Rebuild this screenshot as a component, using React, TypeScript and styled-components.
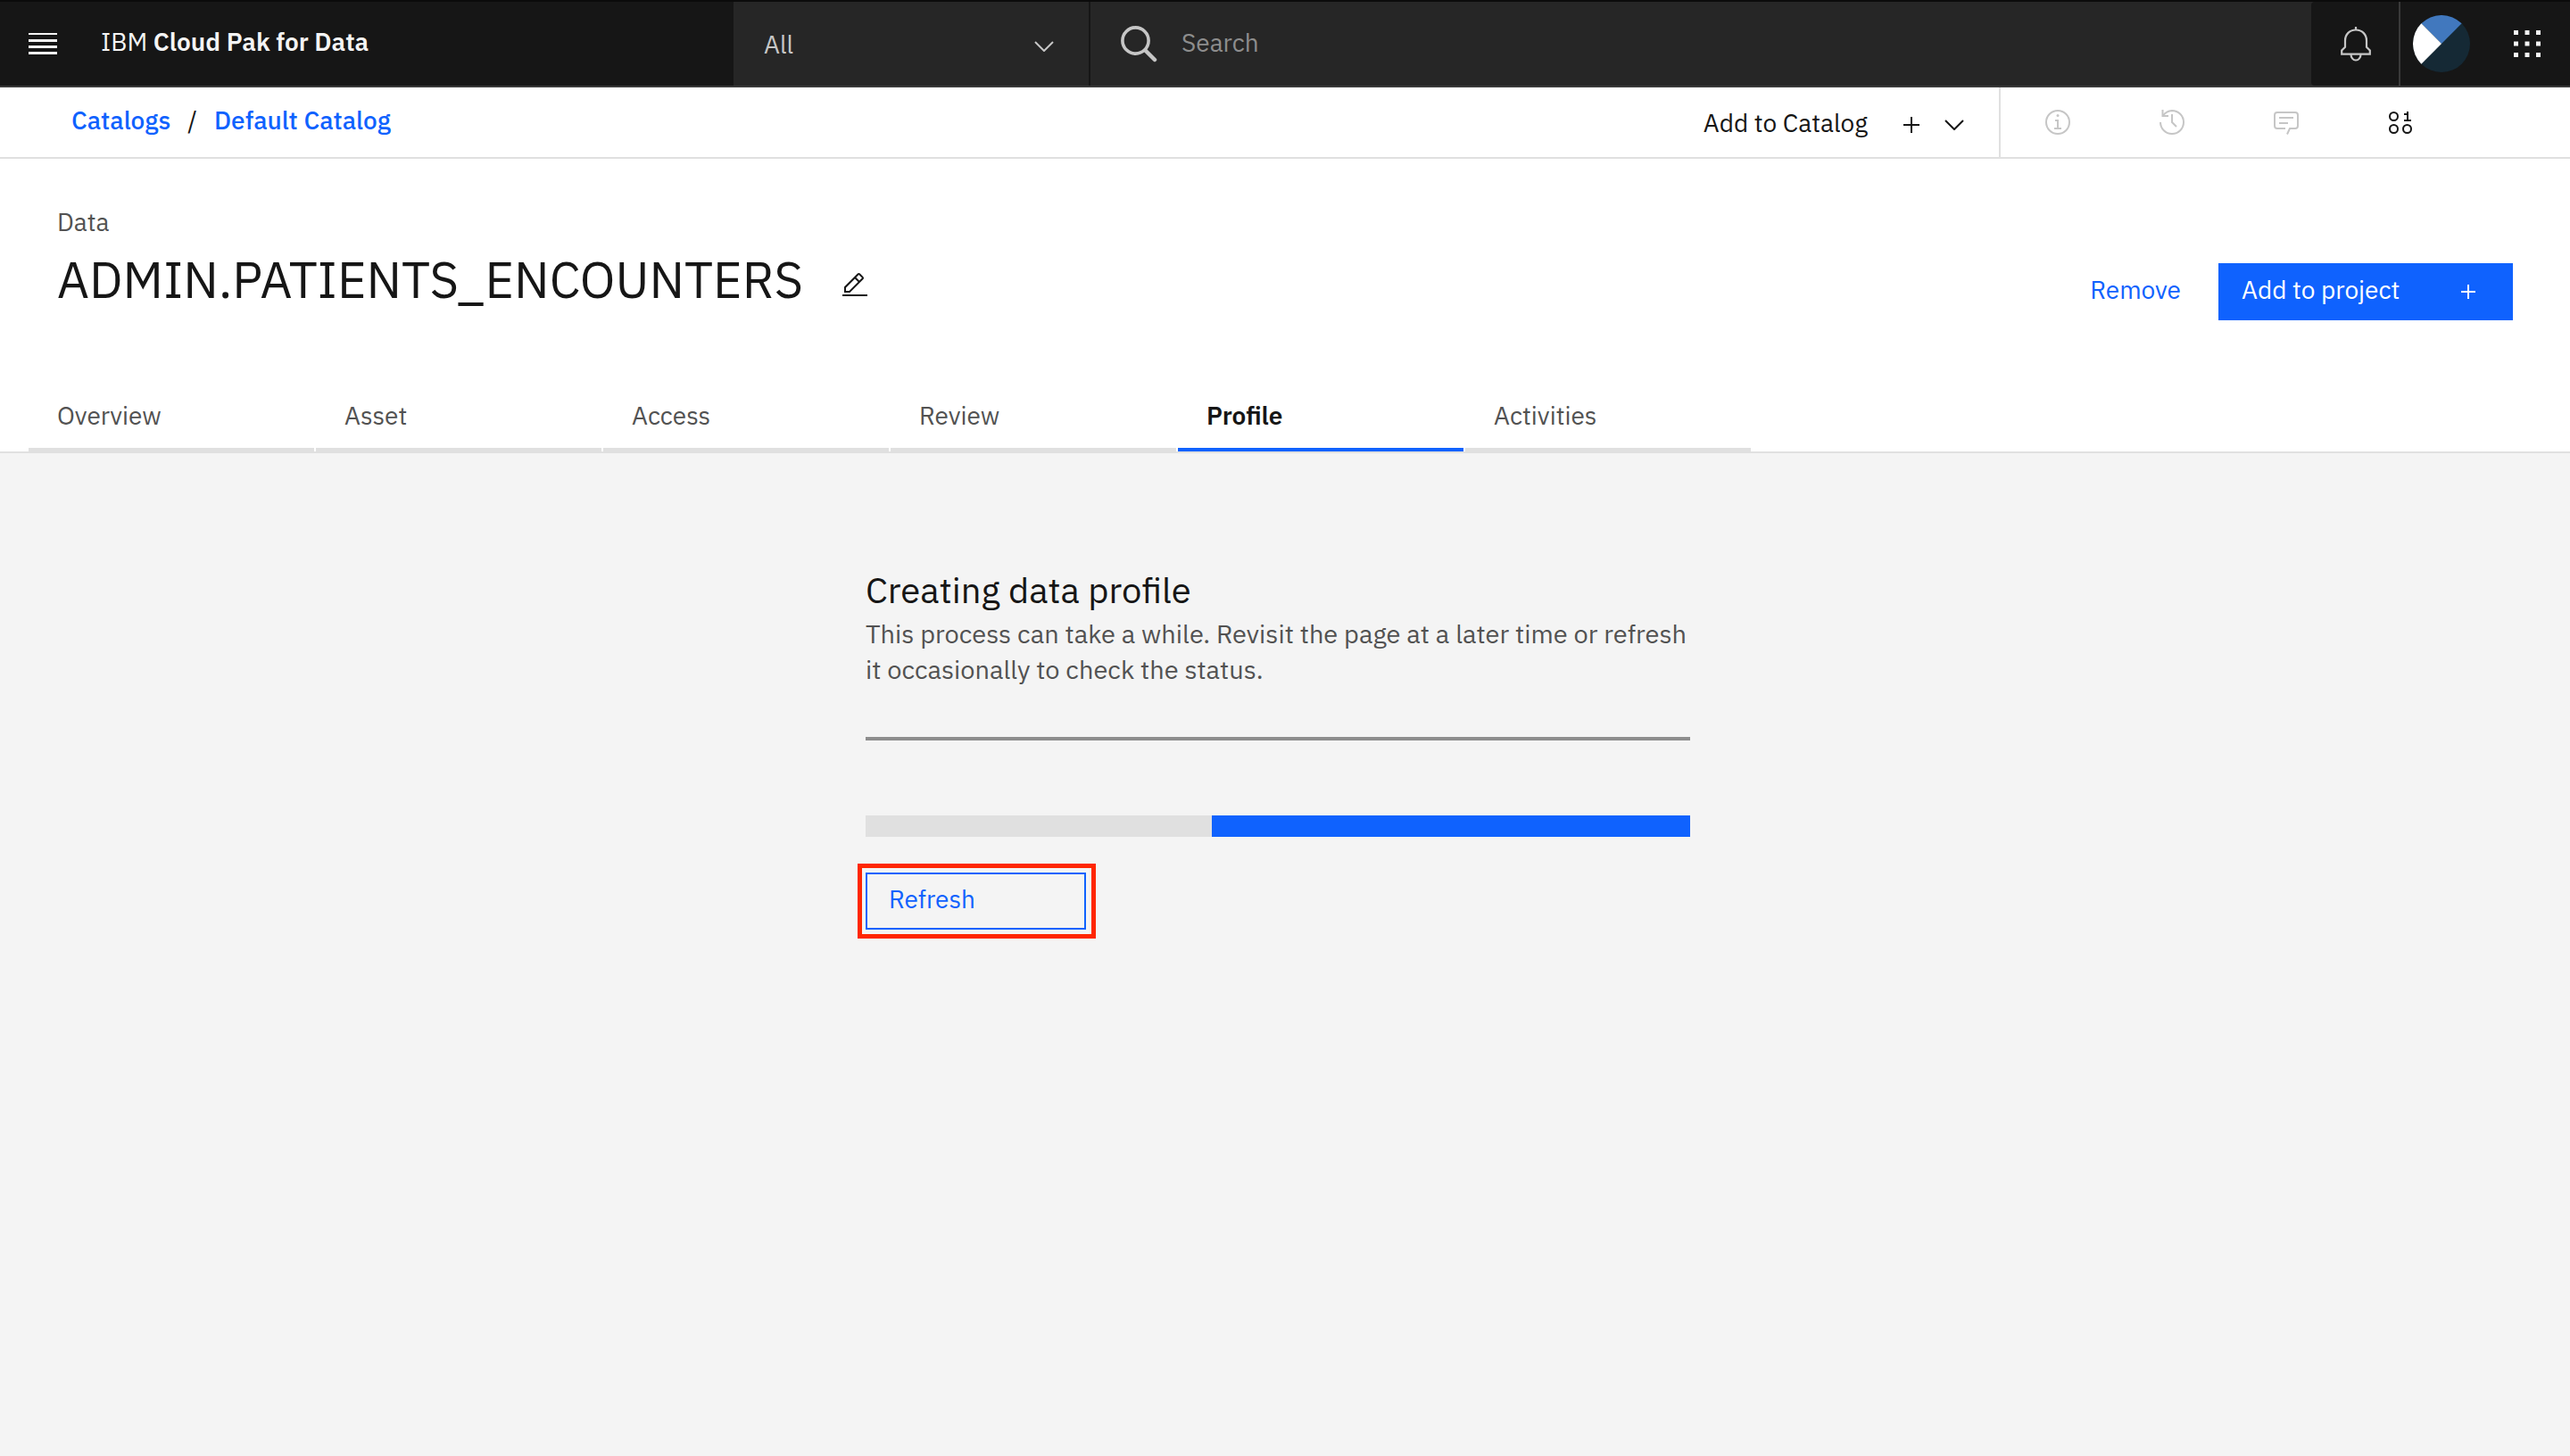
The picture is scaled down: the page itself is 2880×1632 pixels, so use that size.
import React from 'react';
import styled, { createGlobalStyle, css } from 'styled-components';

const sans = "'IBM Plex Sans', 'Open Sans', 'Noto Sans', sans-serif";

const color = {
  ink: '#161616',
  field: '#262626',
  line: '#393939',
  blue: '#0f62fe',
  textSoft: '#525252',
  iconSoft: '#c6c6c6',
  rule: '#8d8d8d',
  border: '#e0e0e0',
  page: '#f4f4f4',
};

const GlobalStyle = createGlobalStyle`
  *, *::before, *::after { box-sizing: border-box; }
  html, body { margin: 0; min-height: 100%; background: ${color.page}; }
  body { font: 400 28px/40px ${sans}; color: ${color.ink}; }
  button, input, select { font: inherit; margin: 0; }
  h1, h2, p { margin: 0; font-weight: 400; }
`;

const PlainButton = styled.button`
  display: flex;
  align-items: center;
  justify-content: center;
  padding: 0;
  border: 0;
  background: none;
  color: inherit;
  cursor: pointer;
`;

/* Global header */

const Header = styled.header`
  display: flex;
  height: 98px;
  background: ${color.field};
  border-top: 2px solid #0b0b0b;
  border-bottom: 2px solid ${color.line};
  color: #f4f4f4;
`;

const Brand = styled.div`
  flex: 0 0 822px;
  display: flex;
  align-items: center;
  background: ${color.ink};
`;

const MenuButton = styled(PlainButton)`
  width: 96px;
  height: 94px;
`;

const BrandName = styled.span`
  padding: 0 0 4px 17px;
  white-space: pre;

  strong { font-weight: 600; }
`;

const ScopeField = styled.div`
  flex: 0 0 400px;
  display: grid;
  align-items: center;
  border-right: 2px solid ${color.ink};
  color: ${color.iconSoft};

  > select, > svg { grid-area: 1 / 1; }
  > svg { justify-self: end; margin: 6px 39px 0 0; pointer-events: none; }
`;

const ScopeSelect = styled.select`
  appearance: none;
  width: 100%;
  height: 100%;
  padding: 2px 34px 0;
  border: 0;
  border-radius: 0;
  background: transparent;
  color: inherit;
`;

const SearchField = styled.div`
  flex: 1;
  display: flex;
  align-items: center;
  gap: 27px;
  padding-left: 34px;
`;

const SearchInput = styled.input`
  flex: 1;
  min-width: 0;
  height: 100%;
  padding: 0 0 4px;
  border: 0;
  outline: 0;
  background: transparent;
  color: #f4f4f4;

  &::placeholder { color: ${color.rule}; opacity: 1; }
`;

const BellButton = styled(PlainButton)`
  width: 100px;
  padding-left: 1px;
  border-right: 2px solid ${color.line};
  border-radius: 4px 0 0 4px;
  background: ${color.ink};
`;

const AccountButton = styled(PlainButton)`
  width: 92px;
  background: ${color.ink};
`;

const AppsButton = styled(PlainButton)`
  width: 98px;
  padding-left: 1px;
  background: ${color.ink};
`;

/* Breadcrumb toolbar */

const Toolbar = styled.div`
  display: flex;
  align-items: stretch;
  justify-content: space-between;
  height: 80px;
  background: #fff;
  border-bottom: 2px solid ${color.border};
`;

const Breadcrumb = styled.nav`
  display: flex;
  align-items: center;
  gap: 19px;
  padding: 0 0 4px 80px;
`;

const Crumb = styled.a`
  font-weight: 500;
  color: ${color.blue};
  text-decoration: none;
`;

const ToolGroup = styled.div`
  display: flex;
`;

const AddToCatalog = styled(PlainButton)`
  padding: 2px 39px 0 0;
  border-right: 2px solid ${color.border};

  svg:first-of-type { margin: 4px 28px 0 40px; }
  svg:last-of-type { margin-top: 4px; }
`;

const PanelButtons = styled.div`
  display: flex;
  padding-right: 126px;
`;

const PanelButton = styled(PlainButton)<{ $active?: boolean }>`
  width: 128px;
  color: ${(p) => (p.$active ? color.ink : color.iconSoft)};
`;

/* Asset heading */

const AssetHeader = styled.section`
  background: #fff;
  border-bottom: 2px solid ${color.border};
`;

const TitleRow = styled.div`
  display: flex;
  justify-content: space-between;
  align-items: flex-end;
  padding: 51px 64px 66px;
`;

const AssetKind = styled.p`
  margin-bottom: 8px;
  color: ${color.textSoft};
`;

const TitleLine = styled.div`
  display: flex;
  align-items: center;
  gap: 42px;
  margin-bottom: 10px;
`;

const Title = styled.h1`
  font-size: 56px;
  line-height: 72px;
`;

const EditButton = styled(PlainButton)`
  padding-top: 14px;
`;

const Actions = styled.div`
  display: flex;
  align-items: center;
  gap: 42px;
`;

const RemoveButton = styled(PlainButton)`
  height: 64px;
  padding-bottom: 4px;
  color: ${color.blue};
`;

const PrimaryButton = styled(PlainButton)`
  justify-content: space-between;
  width: 330px;
  height: 64px;
  padding: 0 42px 0 26px;
  background: ${color.blue};
  color: #fff;

  span { padding-bottom: 4px; }
`;

const TabList = styled.div`
  display: flex;
  gap: 2px;
  padding-left: 32px;
  margin-bottom: -2px;
`;

const Tab = styled.button<{ $selected: boolean }>`
  flex: 0 0 320px;
  padding: 21px 32px 16px;
  border: 0;
  border-bottom: 6px solid ${color.border};
  background: none;
  color: ${color.textSoft};
  text-align: left;
  cursor: pointer;

  ${(p) =>
    p.$selected &&
    css`
      font-weight: 600;
      color: ${color.ink};
      border-bottom: 4px solid ${color.blue};
      margin-bottom: 2px;
    `}
`;

/* Profile status */

const Main = styled.main`
  display: flex;
  justify-content: center;
  padding: 129px 32px 64px;
`;

const Status = styled.section`
  display: flex;
  flex-direction: column;
  align-items: flex-start;
  width: 100%;
  max-width: 940px;
  padding-right: 16px;
`;

const StatusTitle = styled.h2`
  font-size: 40px;
  line-height: 48px;
`;

const StatusText = styled.p`
  margin: 5px -16px 56px 0;
  font-size: 29px;
  color: ${color.textSoft};
`;

const Divider = styled.hr`
  width: 100%;
  height: 4px;
  margin: 0 0 84px;
  border: 0;
  background: ${color.rule};
`;

const ProgressTrack = styled.div`
  display: flex;
  justify-content: flex-end;
  width: 100%;
  height: 24px;
  margin-bottom: 40px;
  background: ${color.border};
`;

const ProgressFill = styled.div`
  width: 58%;
  background: ${color.blue};
`;

const RefreshWrap = styled.div`
  position: relative;
`;

const RefreshButton = styled.button`
  display: flex;
  align-items: center;
  width: 247px;
  height: 64px;
  padding: 0 24px 4px;
  border: 2px solid ${color.blue};
  background: none;
  color: ${color.blue};
  cursor: pointer;
`;

const Highlight = styled.span`
  position: absolute;
  inset: -10px -11px -10px -9px;
  border: 5px solid #ff2600;
  pointer-events: none;
`;

/* Icons */

const ChevronIcon = () => (
  <svg width="22" height="12" viewBox="0 0 22 12" fill="none" stroke="currentColor" strokeWidth="2" aria-hidden="true">
    <path d="M1 1l10 10L21 1" />
  </svg>
);

const PlusIcon = ({ size }: { size: number }) => (
  <svg width={size} height={size} viewBox={`0 0 ${size} ${size}`} fill="none" stroke="currentColor" strokeWidth="2" aria-hidden="true">
    <path d={`M${size / 2} 0v${size}M0 ${size / 2}h${size}`} />
  </svg>
);

const MenuIcon = () => (
  <svg width="32" height="24" viewBox="0 0 32 24" fill="#f4f4f4" aria-hidden="true">
    <path d="M0 0h32v2H0zM0 7h32v3H0zM0 14h32v3H0zM0 21h32v3H0z" />
  </svg>
);

const SearchIcon = () => (
  <svg width="41" height="41" viewBox="0 0 41 41" fill="none" stroke={color.iconSoft} aria-hidden="true">
    <circle cx="16.500" cy="16.500" r="14.600" strokeWidth="3.600" />
    <path d="M27.500 27.500l10.500 10.500" strokeWidth="4.500" strokeLinecap="round" />
  </svg>
);

const BellIcon = () => (
  <svg width="34" height="39" viewBox="0 0 34 39" fill="none" stroke={color.iconSoft} strokeWidth="2.200" aria-hidden="true">
    <path d="M17 0v4" />
    <path d="M17 3.500C10 3.500 5 8.500 5 15.500v7.200l-3.800 3.800v4.200h31.600v-4.200L29 22.700v-7.200C29 8.500 24 3.500 17 3.500z" />
    <path d="M11.500 31a5.500 6.500 0 0 0 11 0" />
  </svg>
);

const AvatarIcon = () => (
  <svg width="64" height="64" viewBox="0 0 64 64" aria-hidden="true">
    <circle cx="32" cy="32" r="32" fill="#152935" />
    <path d="M32 32L9.370 9.370A32 32 0 0 1 54.630 9.370z" fill="#4178be" />
    <path d="M32 32L9.370 54.630A32 32 0 0 1 9.370 9.370z" fill="#fff" />
  </svg>
);

const AppsIcon = () => (
  <svg width="30" height="30" viewBox="0 0 30 30" fill="#f4f4f4" aria-hidden="true">
    {[0, 12.5, 25].map((y) => [0, 12.5, 25].map((x) => <rect key={`${x}-${y}`} x={x} y={y} width="5" height="5" />))}
  </svg>
);

const InfoIcon = () => (
  <svg width="28" height="28" viewBox="0 0 28 28" fill="none" stroke="currentColor" strokeWidth="2" aria-hidden="true">
    <circle cx="14" cy="14" r="13" />
    <path d="M11 12h3v9M10 21h8" />
    <circle cx="14" cy="6.600" r="1.500" fill="currentColor" stroke="none" />
  </svg>
);

const HistoryIcon = () => (
  <svg width="28" height="28" viewBox="0 0 28 28" fill="none" stroke="currentColor" strokeWidth="2" aria-hidden="true">
    <path d="M1 14A13 13 0 1 0 14 1A13 13 0 0 0 4 6.500" />
    <path d="M3.500 0v7h6.500M14 5v9l5 5" />
  </svg>
);

const CommentIcon = () => (
  <svg width="28" height="28" viewBox="0 0 28 28" fill="none" stroke="currentColor" strokeWidth="2" aria-hidden="true">
    <path d="M13 21H4a3 3 0 0 1-3-3V6a3 3 0 0 1 3-3h20a3 3 0 0 1 3 3v12a3 3 0 0 1-3 3h-6l-3 6.500" />
    <path d="M6 9h16M6 15h10" />
  </svg>
);

const BinaryIcon = () => (
  <svg width="28" height="28" viewBox="0 0 28 28" fill="none" stroke="currentColor" strokeWidth="2" aria-hidden="true">
    <circle cx="6.500" cy="7.500" r="4.500" />
    <circle cx="6.500" cy="21.500" r="4.500" />
    <circle cx="21.500" cy="21.500" r="4.500" />
    <path d="M18 5h4V2M22 3v9M18 12h8" />
  </svg>
);

const EditIcon = () => (
  <svg width="32" height="32" viewBox="0 0 32 32" fill="currentColor" aria-hidden="true">
    <path d="M2 26h28v2H2zM25.400 9c.8-.8.8-2 0-2.800l-3.600-3.600c-.8-.8-2-.8-2.800 0L4 17.600V24h6.400L25.400 9zM20.400 4L24 7.600l-3 3L17.400 7l3-3zM6 22v-3.600l10-10 3.600 3.600-10 10H6z" />
  </svg>
);

const tabs = ['Overview', 'Asset', 'Access', 'Review', 'Profile', 'Activities'];

export default function App() {
  const [selected, setSelected] = React.useState('Profile');

  return (
    <>
      <GlobalStyle />
      <Header>
        <Brand>
          <MenuButton type="button" aria-label="Menu">
            <MenuIcon />
          </MenuButton>
          <BrandName>
            IBM <strong>Cloud Pak for Data</strong>
          </BrandName>
        </Brand>
        <ScopeField>
          <ScopeSelect aria-label="Search scope" defaultValue="all">
            <option value="all">All</option>
          </ScopeSelect>
          <ChevronIcon />
        </ScopeField>
        <SearchField>
          <SearchIcon />
          <SearchInput type="search" aria-label="Search" placeholder="Search" />
        </SearchField>
        <BellButton type="button" aria-label="Notifications">
          <BellIcon />
        </BellButton>
        <AccountButton type="button" aria-label="Account">
          <AvatarIcon />
        </AccountButton>
        <AppsButton type="button" aria-label="Apps">
          <AppsIcon />
        </AppsButton>
      </Header>

      <Toolbar>
        <Breadcrumb aria-label="Breadcrumb">
          <Crumb href="#catalogs">Catalogs</Crumb>
          <span>/</span>
          <Crumb href="#default-catalog">Default Catalog</Crumb>
        </Breadcrumb>
        <ToolGroup>
          <AddToCatalog type="button">
            Add to Catalog
            <PlusIcon size={18} />
            <ChevronIcon />
          </AddToCatalog>
          <PanelButtons>
            <PanelButton type="button" aria-label="Information">
              <InfoIcon />
            </PanelButton>
            <PanelButton type="button" aria-label="History">
              <HistoryIcon />
            </PanelButton>
            <PanelButton type="button" aria-label="Comments">
              <CommentIcon />
            </PanelButton>
            <PanelButton type="button" aria-label="Data" $active>
              <BinaryIcon />
            </PanelButton>
          </PanelButtons>
        </ToolGroup>
      </Toolbar>

      <AssetHeader>
        <TitleRow>
          <div>
            <AssetKind>Data</AssetKind>
            <TitleLine>
              <Title>ADMIN.PATIENTS_ENCOUNTERS</Title>
              <EditButton type="button" aria-label="Edit name">
                <EditIcon />
              </EditButton>
            </TitleLine>
          </div>
          <Actions>
            <RemoveButton type="button">Remove</RemoveButton>
            <PrimaryButton type="button">
              <span>Add to project</span>
              <PlusIcon size={16} />
            </PrimaryButton>
          </Actions>
        </TitleRow>
        <TabList role="tablist">
          {tabs.map((name) => (
            <Tab
              key={name}
              type="button"
              role="tab"
              aria-selected={name === selected}
              $selected={name === selected}
              onClick={() => setSelected(name)}
            >
              {name}
            </Tab>
          ))}
        </TabList>
      </AssetHeader>

      <Main>
        <Status>
          <StatusTitle>Creating data profile</StatusTitle>
          <StatusText>
            This process can take a while. Revisit the page at a later time or refresh it occasionally to check the status.
          </StatusText>
          <Divider />
          <ProgressTrack role="progressbar" aria-label="Profile progress">
            <ProgressFill />
          </ProgressTrack>
          <RefreshWrap>
            <RefreshButton type="button">Refresh</RefreshButton>
            <Highlight />
          </RefreshWrap>
        </Status>
      </Main>
    </>
  );
}
